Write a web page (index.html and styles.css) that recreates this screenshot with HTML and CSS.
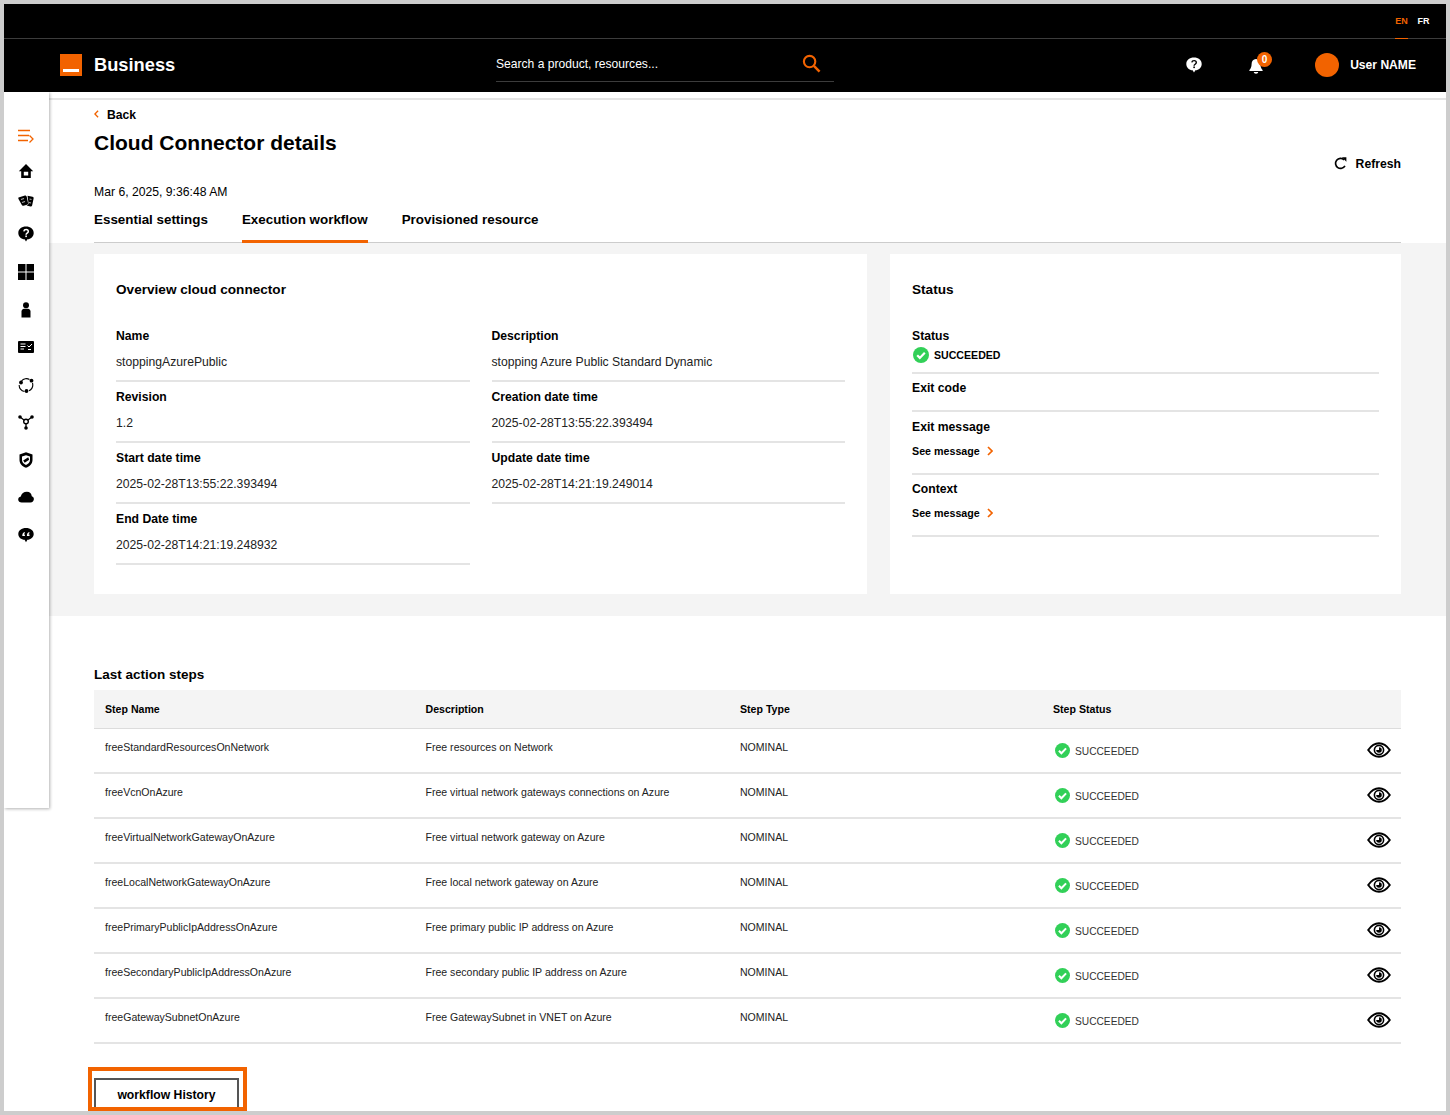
FILE: index.html
```html
<!DOCTYPE html>
<html lang="en">
<head>
<meta charset="utf-8">
<title>Cloud Connector details</title>
<link rel="stylesheet" href="styles.css">
</head>
<body>
<svg class="defs" width="0" height="0" aria-hidden="true">
  <symbol id="ok" viewBox="0 0 16 16">
    <circle cx="8" cy="8" r="8" fill="#32d058"/>
    <path d="M4.2 8.3l2.6 2.6 5-5.2" fill="none" stroke="#fff" stroke-width="2.2"/>
  </symbol>
  <symbol id="eye" viewBox="0 0 24 16">
    <path d="M1.2 8C5 2.6 8.5 1.2 12 1.2S19 2.6 22.8 8C19 13.4 15.5 14.8 12 14.8S5 13.4 1.2 8Z" fill="#fff" stroke="#000" stroke-width="1.9"/>
    <circle cx="12" cy="8" r="4.6" fill="none" stroke="#000" stroke-width="1.6"/>
    <path d="M12 5.2a2.8 2.8 0 1 1-2.8 2.8h2.8z" fill="#000"/>
  </symbol>
  <symbol id="chev" viewBox="0 0 6 10">
    <path d="M1 1l4 4-4 4" fill="none" stroke="#f26300" stroke-width="1.7"/>
  </symbol>
</svg>
<div class="frame">
  <header class="header">
    <div class="topbar">
      <span class="lang lang-on">EN</span>
      <span class="lang">FR</span>
    </div>
    <div class="mainbar">
      <div class="logo"><span class="logo-bar"></span></div>
      <span class="brand">Business</span>
      <div class="search">
        <span class="search-text">Search a product, resources...</span>
        <svg class="search-icon" viewBox="0 0 20 20"><circle cx="8" cy="8" r="6" fill="none" stroke="#f26300" stroke-width="2.2"/><path d="M12.5 12.5L18.5 18.5" stroke="#f26300" stroke-width="2.6"/></svg>
      </div>
      <div class="userzone">
        <svg class="help-icon" viewBox="0 0 16 16"><path d="M8 .5C3.6.5.3 3.2.3 6.900c0 3.500 3 6.200 6.300 6.400L8 15.600l1.400-2.300c3.300-.3 6.300-2.900 6.300-6.400C15.700 3.200 12.400.5 8 .5z" fill="#fff"/><path d="M5.800 5.400c.2-1.200 1.100-1.800 2.300-1.800 1.300 0 2.200.8 2.200 1.900 0 1.700-2.200 1.700-2.200 3.200" fill="none" stroke="#000" stroke-width="1.400"/><rect x="7.300" y="9.500" width="1.600" height="1.600" fill="#000"/></svg>
        <div class="bell">
          <svg class="bell-icon" viewBox="0 0 14 16"><path d="M7 1c-2.800 0-4.400 2.200-4.400 5 0 2.800-.9 4.800-2.200 6.100v.9h13.200v-.9C12.300 10.800 11.400 8.800 11.400 6 11.400 3.200 9.800 1 7 1z" fill="#fff"/><path d="M4.800 14h4.400c0 1-1 1.700-2.200 1.700S4.800 15 4.800 14z" fill="#fff"/></svg>
          <span class="badge">0</span>
        </div>
        <span class="avatar"></span>
        <span class="username">User NAME</span>
      </div>
    </div>
  </header>
  <div class="body">
    <nav class="sidebar">
      <svg class="side-icon" viewBox="0 0 16 14"><path d="M0 1.500h12M0 6.500h11M0 11.500h10" stroke="#f26300" stroke-width="1.600" fill="none"/><path d="M11.500 6.500l3.500 3.500-3.500 3.500" stroke="#f26300" stroke-width="1.300" fill="none"/></svg>
      <svg class="side-icon gap15" viewBox="0 0 16 16"><path fill-rule="evenodd" d="M8 1L.8 8.300h2.400V15h9.600V8.300h2.400zM5.800 8.800h4.400v3.700H5.800z"/></svg>
      <svg class="side-icon gap10" viewBox="0 0 16 14"><path d="M.5 3.500L7 1.500c1 0 1.500.5 1.800 1.500l1.200 6c.2 1-.2 1.500-1 1.800l-3.500 1c-1 .2-1.500-.2-1.800-1L.5 5c-.3-.7-.3-1.200 0-1.500z"/><path d="M9.500 1.800l5 1c.8.200 1.300.7 1.100 1.600l-1.500 7c-.2.800-.8 1.200-1.600 1l-4-1c1.500-.5 2.200-1.200 2-2.500z"/><path d="M3 5.500l3-1M4 8.500l3-1M11.500 5l2 .5M11 8.500l2 .5" stroke="#aaa" stroke-width="1.100"/></svg>
      <svg class="side-icon gap13" viewBox="0 0 16 16"><path d="M8 .5C3.600.5.300 3.200.300 6.900c0 3.500 3 6.200 6.300 6.400L8 15.600l1.400-2.300c3.300-.3 6.300-2.900 6.300-6.400C15.700 3.200 12.400.5 8 .5z"/><path d="M5.800 5.400c.2-1.200 1.100-1.800 2.300-1.800 1.300 0 2.200.8 2.200 1.900 0 1.700-2.200 1.700-2.200 3.200" fill="none" stroke="#fff" stroke-width="1.500"/><rect x="7.300" y="9.500" width="1.600" height="1.600" fill="#fff"/></svg>
      <svg class="side-icon gap18" viewBox="0 0 16 16"><path d="M0 0h7.500v7.500H0zM8.500 0H16v7.500H8.500zM0 8.500h7.500V16H0zM8.500 8.500H16V16H8.500z"/></svg>
      <svg class="side-icon gap18" viewBox="0 0 16 16"><circle cx="8" cy="3.200" r="3"/><path d="M3.500 15.500V9.500C3.500 7.500 5 6.700 6 6.700h4c1 0 2.500.8 2.500 2.800v6z"/></svg>
      <svg class="side-icon gap17" viewBox="0 0 16 13"><rect y=".5" width="16" height="12" rx="1"/><path d="M2.500 3.500h5M2.500 6h5M2.500 8.500h3.500M9.500 5l1.500 1.500 3-3M10 9h3" stroke="#fff" stroke-width="1" fill="none"/></svg>
      <svg class="side-icon gap18" viewBox="0 0 16 16"><path d="M3.500 4C5.500 1.500 9 1 11.500 2.500M14.500 6c.8 3-.3 6-3.500 7.800M6.500 14.500C3 14 1 11 1.200 8" fill="none" stroke="#000" stroke-width="1.100"/><circle cx="3" cy="5.500" r="1.900"/><circle cx="13.500" cy="3.700" r="1.900"/><circle cx="8.500" cy="14" r="1.900"/></svg>
      <svg class="side-icon gap17" viewBox="0 0 16 16"><path d="M2 3l6 4.500L14 3M8 7.500V14" stroke="#000" stroke-width="1.300" fill="none"/><circle cx="8" cy="7.500" r="2.300" fill="#fff" stroke="#000" stroke-width="1.400"/><circle cx="2" cy="3" r="1.800"/><circle cx="14" cy="3" r="1.800"/><circle cx="8" cy="14" r="1.800"/></svg>
      <svg class="side-icon gap18" viewBox="0 0 16 16"><path fill-rule="evenodd" d="M8 .3L14.500 2.500V8c0 3.700-2.700 6.400-6.500 7.700C4.200 14.400 1.500 11.700 1.500 8V2.500zM8 3.300L4 4.500V8c0 2.300 1.600 4 4 5 2.400-1 4-2.700 4-5V4.500z"/><path d="M5.200 8.500l5-3.200 1 2.500-4.500 3z"/></svg>
      <svg class="side-icon gap17" viewBox="0 0 16 12"><path d="M3.700 11.500C1.700 11.500.2 10.200.2 8.400c0-1.500 1-2.700 2.600-3C3.500 2.800 5.700.7 8.900.7c2.900 0 4.700 2 4.900 4.500 1.300.4 2.100 1.500 2.100 2.900 0 1.900-1.500 3.400-3.400 3.400z"/></svg>
      <svg class="side-icon gap18" viewBox="0 0 16 16"><path d="M8 1C3.600 1 .3 3.400.3 6.900c0 3.400 3 5.700 6.300 5.900L8 15.300l1.400-2.500c3.300-.3 6.300-2.500 6.300-5.900C15.700 3.400 12.400 1 8 1z"/><path d="M4.300 8.800c0-2 .7-3.300 2.500-3.800v1.300c-.6.300-.8.700-.8 1.100h.9v1.700H4.300zM8.900 8.800c0-2 .7-3.300 2.500-3.800v1.300c-.6.300-.8.700-.8 1.100h.9v1.700H8.900z" fill="#fff"/></svg>
    </nav>
    <main class="main">
      <div class="topline"></div>
      <section class="head">
        <a class="back"><svg class="back-chev" viewBox="0 0 6 10"><path d="M5 1L1 5l4 4" fill="none" stroke="#f26300" stroke-width="1.700"/></svg>Back</a>
        <div class="title-row">
          <h1 class="title">Cloud Connector details</h1>
          <a class="refresh"><svg class="refresh-icon" viewBox="0 0 14 14"><path d="M11.800 9.500A5.400 5.400 0 1 1 10.800 3" fill="none" stroke="#000" stroke-width="1.800"/><path d="M8.500 .3h4.800v4.800z"/></svg>Refresh</a>
        </div>
        <div class="date">Mar 6, 2025, 9:36:48 AM</div>
        <div class="tabs">
          <span class="tab">Essential settings</span>
          <span class="tab tab-on">Execution workflow</span>
          <span class="tab">Provisioned resource</span>
        </div>
      </section>
      <section class="band">
        <div class="card">
          <h2 class="card-title">Overview cloud connector</h2>
          <div class="fields">
            <div class="field"><div class="label">Name</div><div class="value">stoppingAzurePublic</div></div>
            <div class="field"><div class="label">Description</div><div class="value">stopping Azure Public Standard Dynamic</div></div>
            <div class="field"><div class="label">Revision</div><div class="value">1.2</div></div>
            <div class="field"><div class="label">Creation date time</div><div class="value">2025-02-28T13:55:22.393494</div></div>
            <div class="field"><div class="label">Start date time</div><div class="value">2025-02-28T13:55:22.393494</div></div>
            <div class="field"><div class="label">Update date time</div><div class="value">2025-02-28T14:21:19.249014</div></div>
            <div class="field"><div class="label">End Date time</div><div class="value">2025-02-28T14:21:19.248932</div></div>
          </div>
        </div>
        <div class="card">
          <h2 class="card-title">Status</h2>
          <div class="st st-status">
            <div class="label">Status</div>
            <div class="st-value"><svg class="ok-icon"><use href="#ok"/></svg>SUCCEEDED</div>
          </div>
          <div class="st st-code"><div class="label">Exit code</div></div>
          <div class="st st-msg">
            <div class="label">Exit message</div>
            <a class="see">See message<svg class="see-chev"><use href="#chev"/></svg></a>
          </div>
          <div class="st st-msg st-ctx">
            <div class="label">Context</div>
            <a class="see">See message<svg class="see-chev"><use href="#chev"/></svg></a>
          </div>
        </div>
      </section>
      <section class="steps">
        <h2 class="steps-title">Last action steps</h2>
        <table class="table">
          <colgroup><col class="c1"><col class="c2"><col class="c3"><col class="c4"><col></colgroup>
          <thead><tr><th>Step Name</th><th>Description</th><th>Step Type</th><th>Step Status</th><th></th></tr></thead>
          <tbody>
            <tr><td>freeStandardResourcesOnNetwork</td><td>Free resources on Network</td><td>NOMINAL</td><td class="td-status"><span class="rs"><svg class="rs-ok"><use href="#ok"/></svg>SUCCEEDED</span></td><td class="td-eye"><svg class="eye"><use href="#eye"/></svg></td></tr>
            <tr><td>freeVcnOnAzure</td><td>Free virtual network gateways connections on Azure</td><td>NOMINAL</td><td class="td-status"><span class="rs"><svg class="rs-ok"><use href="#ok"/></svg>SUCCEEDED</span></td><td class="td-eye"><svg class="eye"><use href="#eye"/></svg></td></tr>
            <tr><td>freeVirtualNetworkGatewayOnAzure</td><td>Free virtual network gateway on Azure</td><td>NOMINAL</td><td class="td-status"><span class="rs"><svg class="rs-ok"><use href="#ok"/></svg>SUCCEEDED</span></td><td class="td-eye"><svg class="eye"><use href="#eye"/></svg></td></tr>
            <tr><td>freeLocalNetworkGatewayOnAzure</td><td>Free local network gateway on Azure</td><td>NOMINAL</td><td class="td-status"><span class="rs"><svg class="rs-ok"><use href="#ok"/></svg>SUCCEEDED</span></td><td class="td-eye"><svg class="eye"><use href="#eye"/></svg></td></tr>
            <tr><td>freePrimaryPublicIpAddressOnAzure</td><td>Free primary public IP address on Azure</td><td>NOMINAL</td><td class="td-status"><span class="rs"><svg class="rs-ok"><use href="#ok"/></svg>SUCCEEDED</span></td><td class="td-eye"><svg class="eye"><use href="#eye"/></svg></td></tr>
            <tr><td>freeSecondaryPublicIpAddressOnAzure</td><td>Free secondary public IP address on Azure</td><td>NOMINAL</td><td class="td-status"><span class="rs"><svg class="rs-ok"><use href="#ok"/></svg>SUCCEEDED</span></td><td class="td-eye"><svg class="eye"><use href="#eye"/></svg></td></tr>
            <tr><td>freeGatewaySubnetOnAzure</td><td>Free GatewaySubnet in VNET on Azure</td><td>NOMINAL</td><td class="td-status"><span class="rs"><svg class="rs-ok"><use href="#ok"/></svg>SUCCEEDED</span></td><td class="td-eye"><svg class="eye"><use href="#eye"/></svg></td></tr>
          </tbody>
        </table>
        <div class="btn-wrap">
          <button class="btn">workflow History</button>
          <span class="highlight"></span>
        </div>
      </section>
    </main>
  </div>
</div>
</body>
</html>
```
FILE: styles.css
```css
* { box-sizing: border-box; }
html, body { margin: 0; padding: 0; height: 1115px; overflow: hidden; background: #fff; }
body { font-family: "Liberation Sans", Arial, sans-serif; color: #000; font-size: 12.2px; }
.defs { position: absolute; }
.frame { width: 1450px; height: 1115px; border: 4px solid #cdcdcd; overflow: hidden; background: #fff; }

.header { background: #000; height: 88px; color: #fff; }
.topbar { height: 35px; border-bottom: 1px solid #3c3c3c; display: flex; justify-content: flex-end; gap: 9px; padding-right: 16px; }
.lang { font-size: 9px; font-weight: 700; line-height: 34px; height: 35px; width: 13px; text-align: center; }
.lang-on { color: #f26300; border-bottom: 1px solid #f26300; }
.mainbar { height: 53px; display: flex; align-items: center; padding: 0 30px 2px 56px; }
.logo { width: 22px; height: 22px; background: #f26300; position: relative; margin-right: 12px; }
.logo-bar { position: absolute; left: 3px; right: 3px; bottom: 4px; height: 3px; background: #fff; }
.brand { font-size: 18.3px; font-weight: 700; width: 402px; }
.search { width: 338px; height: 35px; margin-top: -1px; border-bottom: 1px solid #3c3c3c; display: flex; align-items: center; justify-content: space-between; padding-right: 13px; }
.search-text { font-size: 12.1px; }
.search-icon { width: 19px; height: 19px; }
.userzone { margin-left: auto; display: flex; align-items: center; }
.help-icon { width: 16px; height: 16px; margin-right: 47px; margin-top: 1px; }
.bell { position: relative; width: 14px; height: 16px; margin-right: 52px; margin-top: 2px; }
.bell-icon { width: 14px; height: 16px; display: block; }
.badge { position: absolute; left: 8px; top: -6px; width: 15px; height: 15px; border-radius: 50%; background: #f26300; color: #fff; font-size: 10px; font-weight: 700; line-height: 15px; text-align: center; }
.avatar { width: 24px; height: 24px; border-radius: 50%; background: #f26300; margin-right: 11px; }
.username { font-size: 12.1px; font-weight: 700; }

.body { display: flex; align-items: flex-start; }
.sidebar { width: 45px; height: 716px; flex: none; padding: 34px 1px 0 0; background: #fff; box-shadow: 1px 1px 3px rgba(0,0,0,.3); display: flex; flex-direction: column; align-items: center; position: relative; z-index: 1; }
.side-icon { width: 16px; height: 20px; flex: none; }
.gap10 { margin-top: 10px; }
.gap13 { margin-top: 13px; }
.gap15 { margin-top: 15px; }
.gap17 { margin-top: 17px; }
.gap18 { margin-top: 18px; }

.main { flex: 1; min-width: 0; }
.topline { height: 8px; border-bottom: 2px solid #e4e4e4; }
.head { padding: 6px 45px 0; }
.back { display: flex; align-items: center; height: 18px; font-weight: 700; font-size: 12.2px; }
.back-chev { width: 5px; height: 8px; margin-right: 8px; margin-top: -2px; }
.title-row { display: flex; justify-content: space-between; height: 55px; margin-top: 4px; }
.title { margin: 0; font-size: 21px; line-height: 30px; font-weight: 700; }
.refresh { display: flex; align-items: center; height: 18px; margin-top: 27px; font-weight: 700; font-size: 12.2px; }
.refresh-icon { width: 13px; height: 13px; margin-right: 9px; margin-top: -2px; }
.date { height: 18px; line-height: 18px; font-size: 12.2px; }
.tabs { display: flex; gap: 34px; height: 37px; margin-top: 5px; border-bottom: 1px solid #ccc; }
.tab { font-size: 13.4px; font-weight: 700; line-height: 27px; height: 37px; }
.tab-on { border-bottom: 3px solid #f26300; }

.band { background: #f4f4f4; padding: 11px 45px 22px; display: grid; grid-template-columns: 773px 511px; gap: 23px; }
.card { background: #fff; height: 340px; padding: 27px 22px 0; }
.card-title { margin: 0 0 22px; font-size: 13.6px; line-height: 18px; font-weight: 700; }
.fields { display: grid; grid-template-columns: 1fr 1fr; column-gap: 22px; }
.field { height: 61px; padding-top: 6px; border-bottom: 2px solid #e4e4e4; }
.label { font-size: 12.2px; line-height: 18px; font-weight: 700; }
.value { font-size: 12.2px; line-height: 18px; margin-top: 8px; color: #222; }
.st { border-bottom: 2px solid #e4e4e4; }
.st-status { height: 53px; padding-top: 6px; }
.st-value { display: flex; align-items: center; font-size: 10.6px; font-weight: 700; line-height: 18px; margin-top: 1px; }
.ok-icon { width: 16px; height: 16px; margin: 0 5px 0 1px; }
.st-code { height: 38px; padding-top: 5px; }
.st-msg { height: 62.5px; padding-top: 6px; }
.st-ctx { padding-top: 5px; }
.see { display: flex; align-items: center; font-size: 10.7px; font-weight: 700; line-height: 18px; margin-top: 6px; }
.see-chev { width: 6px; height: 10px; margin-left: 7px; }

.steps { padding: 50px 45px 0; }
.steps-title { margin: 0 0 6px; font-size: 13.5px; line-height: 18px; font-weight: 700; }
.table { width: 1307px; border-collapse: separate; border-spacing: 0; table-layout: fixed; }
.c1 { width: 320.5px; }
.c2 { width: 314.5px; }
.c3 { width: 313px; }
.c4 { width: 300px; }
.table th { height: 39px; background: #f4f4f4; border-bottom: 1px solid #dcdcdc; font-size: 10.6px; font-weight: 700; text-align: left; padding: 0 0 0 11px; }
.table td { height: 45px; border-bottom: 2px solid #e4e4e4; font-size: 10.55px; padding: 0 0 7px 11px; color: #222; white-space: nowrap; }
.table td.td-status { padding: 0 0 0 11px; }
.table td.td-eye { padding: 0 10px 2px 0; text-align: right; }
.rs { display: flex; align-items: center; color: #333; font-size: 10.2px; margin-top: 1px; }
.rs-ok { width: 15px; height: 15px; margin: -1px 5px 0 2px; }
.eye { width: 24px; height: 16px; display: inline-block; vertical-align: middle; }
.btn-wrap { position: relative; width: 145px; margin-top: 34px; }
.btn { display: block; width: 145px; height: 40px; padding: 0 0 6px; background: #fff; border: 2px solid #555; font-family: inherit; font-size: 12.2px; font-weight: 700; color: #000; }
.highlight { position: absolute; left: -6px; top: -11px; width: 159px; height: 44px; border: 4px solid #f26300; }
```
